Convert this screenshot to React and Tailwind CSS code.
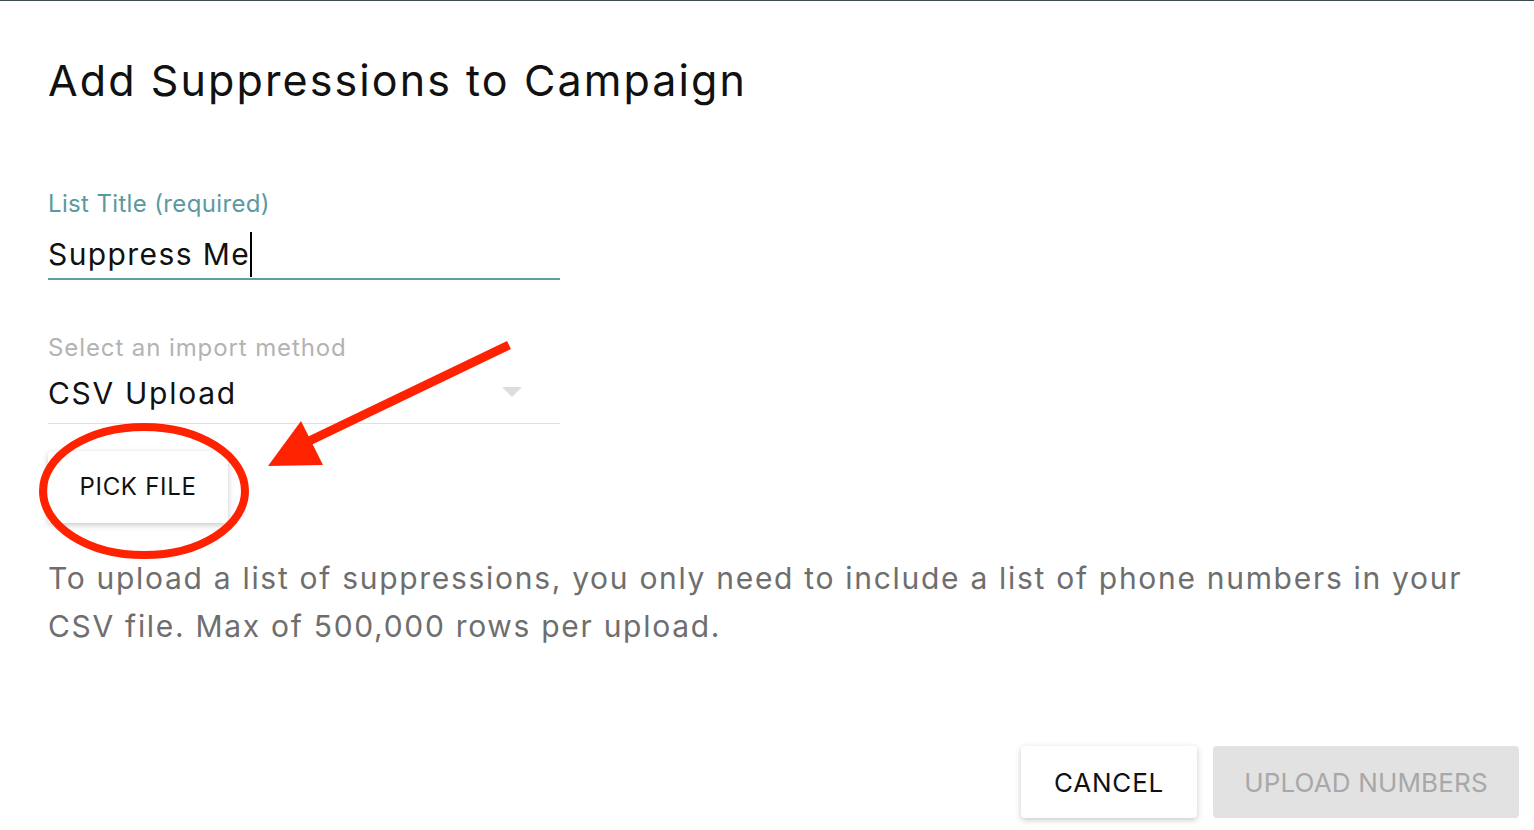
import React from "react";

const FONT = { fontFamily: "Inter, 'Open Sans', sans-serif" };

function Annotation() {
  return (
    <svg
      className="absolute inset-0 pointer-events-none"
      width="1534"
      height="830"
      viewBox="0 0 1534 830"
    >
      <ellipse cx="144" cy="490" rx="101" ry="64" fill="none" stroke="#ff2200" strokeWidth="8" />
      <line x1="509" y1="344" x2="305" y2="442" stroke="#ff2200" strokeWidth="9" />
      <polygon points="301,420 323,464 268,465" fill="#ff2200" />
    </svg>
  );
}

export default function App() {
  return (
    <div className="relative w-[1534px] h-[830px] bg-white overflow-hidden border-t border-[#3d4a4f]" style={FONT}>
      <div className="flex flex-col pl-[48px] pr-[15px]">
        <h1 className="mt-[53px] text-[43px] leading-[52px] text-[#111] tracking-[2.1px]">
          Add Suppressions to Campaign
        </h1>

        <div className="mt-[82px] w-[512px] flex flex-col">
          <label className="text-[24px] leading-[32px] text-[#5b9aa0] tracking-[0.35px]">List Title (required)</label>
          <div className="mt-[16px] h-[44px] pb-[6px] flex items-center border-b-2 border-[#5f9ea0]">
            <span className="text-[30px] leading-[40px] text-[#111] tracking-[1.4px]">Suppress Me</span>
            <span className="w-[2px] h-[45px] bg-black" />
          </div>
        </div>

        <div className="mt-[52px] w-[512px] flex flex-col">
          <label className="text-[24px] leading-[32px] text-[#b3b3b3] tracking-[0.9px]">Select an import method</label>
          <div className="mt-[9px] h-[51px] flex items-start justify-between border-b border-[#e0e0e0]">
            <span className="text-[30px] leading-[40px] text-[#111] tracking-[1.7px]">CSV Upload</span>
            <span className="mt-[14px] mr-[38px] w-0 h-0 border-l-[10px] border-r-[10px] border-t-[10px] border-l-transparent border-r-transparent border-t-[#dcdcdc]" />
          </div>
        </div>

        <button className="mt-[27px] w-[180px] h-[72px] bg-white rounded shadow-[0_2px_6px_rgba(0,0,0,0.22)] text-[24px] text-[#111] tracking-[0.7px] flex items-center justify-center">
          PICK FILE
        </button>

        <p className="mt-[31px] text-[30px] leading-[48px] text-[#6e6e6e] tracking-[1.7px]">
          To upload a list of suppressions, you only need to include a list of phone numbers in your
          <br />
          CSV file. Max of 500,000 rows per upload.
        </p>

        <div className="mt-[96px] flex justify-end gap-4">
          <button className="w-[176px] h-[72px] bg-white rounded shadow-[0_2px_6px_rgba(0,0,0,0.22)] text-[26px] text-[#111] tracking-[0.8px]">
            CANCEL
          </button>
          <button className="w-[306px] h-[72px] bg-[#e2e2e2] rounded text-[26px] text-[#a8a8a8] tracking-[0.15px]">
            UPLOAD NUMBERS
          </button>
        </div>
      </div>
      <Annotation />
    </div>
  );
}
